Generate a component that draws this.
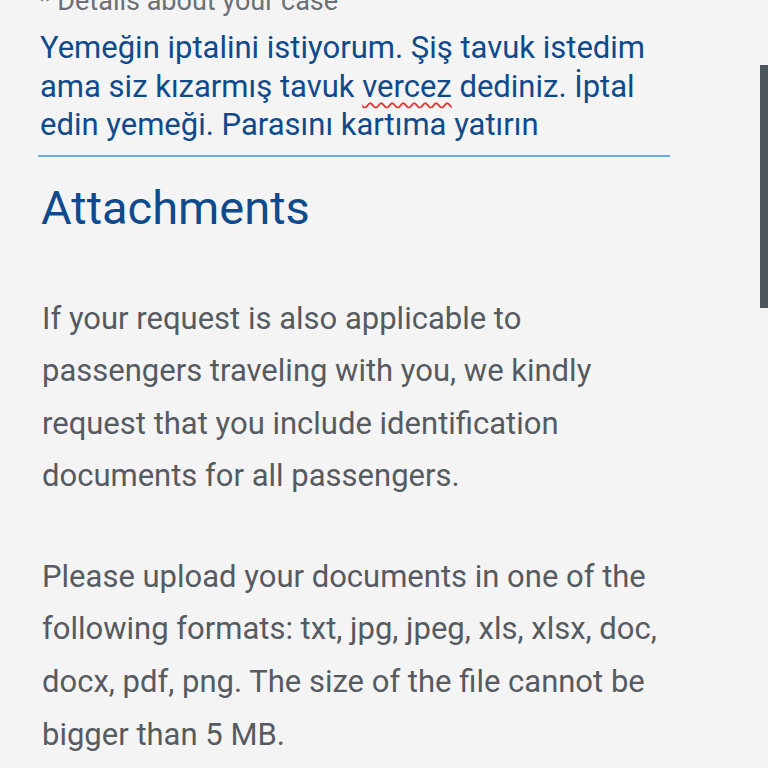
import React from "react";

const App = () => {
  return (
    <div className="relative h-[768px] w-[768px] overflow-hidden bg-[#f4f4f4] font-['Roboto',sans-serif]">
      {/* scroll thumb */}
      <div className="absolute right-0 top-[65px] h-[243px] w-[8px] bg-[#4d565d]" />

      <div className="w-[632px] pl-[38px] box-content">
        <div className="-mt-[15px] pl-[1px] text-[27px] leading-[32px] text-[#6b7076]">* Details about your case</div>

        <div className="mt-[12px] pb-[10px] pl-[2px] text-[31px] leading-[38.5px] text-[#0f4a8d]">
          Yemeğin iptalini istiyorum. Şiş tavuk istedim ama siz kızarmış tavuk{" "}
          <span className="underline decoration-wavy decoration-[#e53935] decoration-[1.5px] underline-offset-[5px]">vercez</span>{" "}
          dediniz. İptal edin yemeği. Parasını kartıma yatırın
        </div>
        <div className="h-[2px] bg-[#6aaae6]" />

        <h2 className="mt-[23px] pl-[3px] text-[47px] leading-[56px] text-[#0f4a8d]">Attachments</h2>

        <div className="mt-[57px] pl-[4px] pr-[2px] text-[31px] leading-[52.6px] text-[#565b61]">
          <p>
            If your request is also applicable to passengers traveling with you, we kindly request that you include
            identification documents for all passengers.
          </p>
          <p className="mt-[48px]">
            Please upload your documents in one of the following formats: txt, jpg, jpeg, xls, xlsx, doc, docx, pdf,
            png. The size of the file cannot be bigger than 5 MB.
          </p>
        </div>
      </div>
    </div>
  );
};

export default App;
